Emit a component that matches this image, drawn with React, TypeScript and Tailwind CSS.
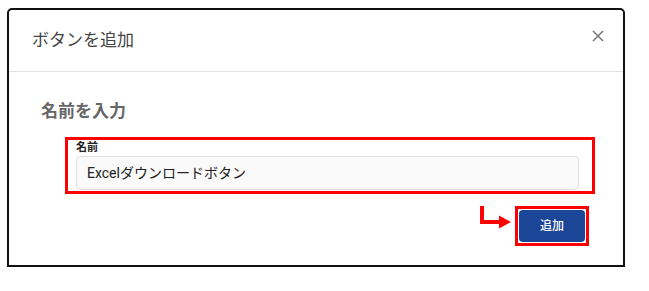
export default function App() {
  return (
    <div
      className="w-[649px] h-[291px] bg-white pt-[8px] pl-[7px]"
      style={{ fontFamily: 'Roboto, "Noto Sans CJK JP", sans-serif' }}
    >
      <div className="w-[618px] h-[259px] border-2 border-[#111] rounded-t-[5px] flex flex-col">
        {/* header */}
        <div className="h-[62px] shrink-0 flex items-center justify-between pl-[23px] pr-[19px] border-b border-[#e2e2e2]">
          <span className="text-[17px] text-[#444] leading-none mt-[-1px]">ボタンを追加</span>
          <svg width="12" height="12" viewBox="0 0 12 12" className="mt-[-9px]">
            <path d="M1 1L11 11M11 1L1 11" stroke="#777" strokeWidth="1.5" />
          </svg>
        </div>

        {/* body */}
        <div className="pl-[32px] pr-[34px] pt-[28px]">
          <h2 className="text-[17px] leading-[22px] font-bold text-[#666]">名前を入力</h2>

          <div className="ml-[24px] mt-[15px] w-[530px] border-[3px] border-[#ff0000] pl-[8px] pr-[13px] pb-[1px]">
            <div className="text-[11px] leading-[15px] font-bold text-[#222]">名前</div>
            <div className="mt-[1px] h-[34px] rounded-[4px] border border-[#dde0e4] bg-[#fafafa] flex items-center pl-[10px] text-[14px] text-[#222]">
              Excelダウンロードボタン
            </div>
          </div>

          <div className="flex justify-end items-start mt-[12px]">
            <svg width="34" height="27" viewBox="0 0 34 27" className="mr-[2px]">
              <path d="M3 0V16H22" stroke="#ff0000" strokeWidth="4" fill="none" />
              <path d="M20 9.5L32 16L20 22.5Z" fill="#ff0000" />
            </svg>
            <div className="border-[3px] border-[#ff0000] p-[1px]">
              <button className="w-[66px] h-[32px] rounded-[4px] bg-[#1b4597] text-white text-[12px] font-medium">
                追加
              </button>
            </div>
          </div>
        </div>
      </div>
    </div>
  );
}
